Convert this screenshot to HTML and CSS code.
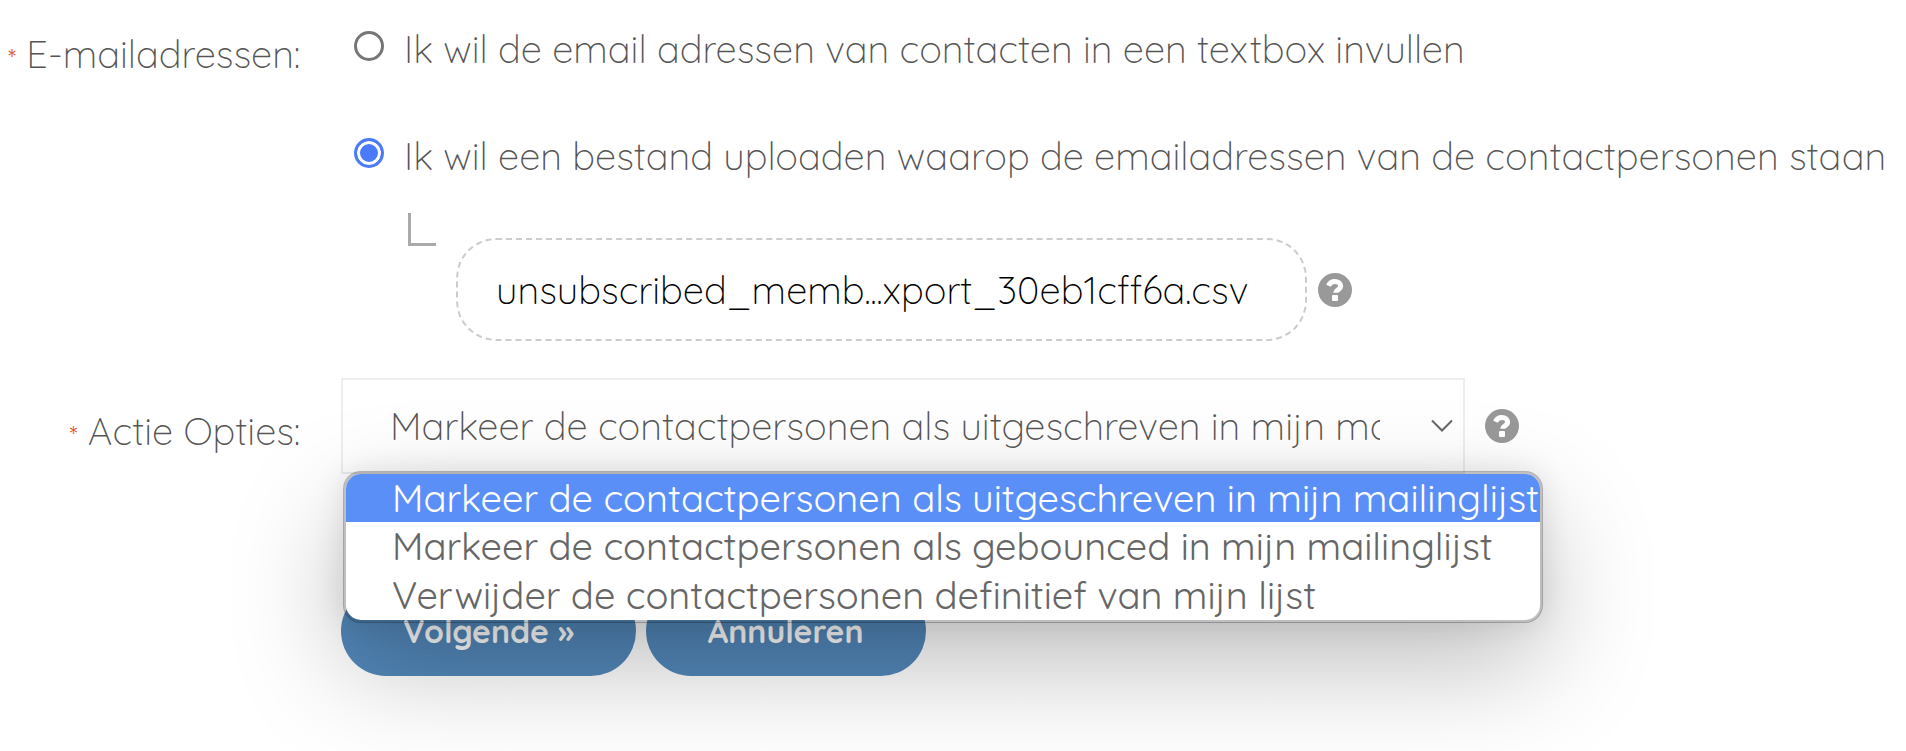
FILE: index.html
```html
<!DOCTYPE html>
<html lang="nl">
<head>
  <meta charset="UTF-8" />
  <meta name="viewport" content="width=device-width, initial-scale=1.0" />
  <title>Contactpersonen uitschrijven</title>
  <link rel="stylesheet" href="styles.css">
</head>
<body>
  <form class="import-form">
    <div class="form-row" role="radiogroup" aria-labelledby="emailLabel">
      <div class="form-label" id="emailLabel"><span class="required">*</span> E-mailadressen:</div>
      <div class="form-field">
        <div class="radio-option">
          <input type="radio" name="source" id="sourceText" />
          <label for="sourceText">Ik wil de email adressen van contacten in een textbox invullen</label>
        </div>
        <div class="radio-option">
          <input type="radio" name="source" id="sourceFile" checked />
          <label for="sourceFile">Ik wil een bestand uploaden waarop de emailadressen van de contactpersonen staan</label>
        </div>
        <div class="upload">
          <span class="branch"></span>
          <div class="upload-file">
            <input type="file" id="file" class="file-input" />
            <label for="file" class="file-name">unsubscribed_memb...xport_30eb1cff6a.csv</label>
            <button type="button" class="help" aria-label="Help">
              <svg viewBox="0 0 34 34"><circle cx="17" cy="17" r="17" fill="#999" /><path d="M10.500 12.800c1.200-3 3.300-4.300 6.300-4.300 3.400 0 5.800 1.700 5.800 4.500 0 3.900-4.900 3.700-4.900 6.800" fill="none" stroke="#fff" stroke-width="5" /><rect x="14" y="22" width="6" height="6" rx="1" fill="#fff" /></svg>
            </button>
          </div>
        </div>
      </div>
    </div>

    <div class="form-row">
      <label class="form-label action-label" for="action"><span class="required">*</span> Actie Opties:</label>
      <div class="form-field select-field">
        <div class="select-box">
          <select id="action">
            <option>Markeer de contactpersonen als uitgeschreven in mijn mailinglijst</option>
            <option>Markeer de contactpersonen als gebounced in mijn mailinglijst</option>
            <option>Verwijder de contactpersonen definitief van mijn lijst</option>
          </select>
          <svg class="chevron" viewBox="0 0 22 14"><path d="M1 1.500l10 10 10-10" fill="none" stroke="#666" stroke-width="2" /></svg>
          <ul class="dropdown" role="listbox" aria-label="Actie Opties">
            <li class="active" role="option" aria-selected="true">Markeer de contactpersonen als uitgeschreven in mijn mailinglijst</li>
            <li role="option">Markeer de contactpersonen als gebounced in mijn mailinglijst</li>
            <li role="option">Verwijder de contactpersonen definitief van mijn lijst</li>
          </ul>
        </div>
        <button type="button" class="help" aria-label="Help">
          <svg viewBox="0 0 34 34"><circle cx="17" cy="17" r="17" fill="#999" /><path d="M10.500 12.800c1.200-3 3.300-4.300 6.300-4.300 3.400 0 5.800 1.700 5.800 4.500 0 3.900-4.900 3.700-4.900 6.800" fill="none" stroke="#fff" stroke-width="5" /><rect x="14" y="22" width="6" height="6" rx="1" fill="#fff" /></svg>
        </button>
      </div>
    </div>

    <div class="form-row buttons-row">
      <div class="buttons">
        <button type="submit" class="btn">Volgende »</button>
        <button type="button" class="btn">Annuleren</button>
      </div>
    </div>
  </form>
</body>
</html>
```
FILE: styles.css
```css
* { margin: 0; padding: 0; box-sizing: border-box; }
body { font-family: Quicksand, Lato, sans-serif; font-size: 38px; font-weight: 300; line-height: 48px; background: #fff; color: #555; }
button, select, input { font: inherit; color: inherit; }

.form-row { display: grid; grid-template-columns: 300px 1fr; column-gap: 41px; padding-right: 4px; }
.import-form { min-height: 100vh; padding: 25px 0 76px; overflow: hidden; }
.form-label { padding-top: 5px; text-align: right; white-space: nowrap; }
.required { font-size: 26px; font-weight: 400; color: #e0582f; }
.form-field { min-width: 0; }

.radio-option { display: flex; align-items: flex-start; gap: 20px; padding-left: 13px; white-space: nowrap; }
.radio-option + .radio-option { margin-top: 59px; }
.radio-option input { flex: none; appearance: none; width: 30px; height: 30px; margin-top: 6px; border: 3px solid #767676; border-radius: 50%; background: #fff; }
.radio-option input:checked { border-color: #4a7bfa; background: #4a7bfa; box-shadow: inset 0 0 0 3px #fff; }

.upload { display: flex; align-items: flex-start; gap: 20px; margin-top: 33px; padding: 0 4px 0 67px; }
.branch { width: 28px; height: 33px; border-left: 3px solid #aaa; border-bottom: 3px solid #aaa; }
.upload-file { display: flex; align-items: center; gap: 11px; flex: 1; margin-top: 25px; }
.file-input { position: absolute; opacity: 0; width: 1px; height: 1px; }
.file-name { width: 59%; padding: 26px 38px 25px; border: 2px dashed #ccc; border-radius: 40px; color: #000; white-space: nowrap; }
.help { display: block; flex: none; width: 34px; height: 34px; border: none; background: none; cursor: pointer; }
.help svg { display: block; }

.action-label { padding-top: 29px; }
.form-row + .form-row { margin-top: 37px; }
.select-field { display: flex; align-items: center; gap: 20px; }
.select-box { position: relative; width: 72%; }
.select-box select { display: block; appearance: none; width: 100%; height: 96px; padding: 0 83px 0 47px; border: 2px solid #eee; border-radius: 0; background: #fff; }
.chevron { position: absolute; right: 12px; top: 41px; width: 22px; height: 14px; }
.dropdown { position: absolute; z-index: 2; top: 93px; left: 2px; right: -78px; list-style: none; overflow: hidden; border: 3px solid rgba(0,0,0,0.25); background: #fff; background-clip: padding-box; border-radius: 18px; box-shadow: 0 44px 110px rgba(0,0,0,0.25), 0 0 30px rgba(0,0,0,0.1); }
.dropdown li { padding-left: 46px; color: #666; font-weight: 400; line-height: 49px; white-space: nowrap; }
.dropdown li.active { background: #5a8ff8; color: #fff; line-height: 48px; }

.form-row.buttons-row { margin-top: 112px; }
.buttons { grid-column: 2; display: flex; gap: 10px; }
.btn { height: 90px; padding: 0 62px; border: none; border-radius: 45px; background: #5388ba; color: #fff; font-size: 32px; font-weight: bold; cursor: pointer; }
```
